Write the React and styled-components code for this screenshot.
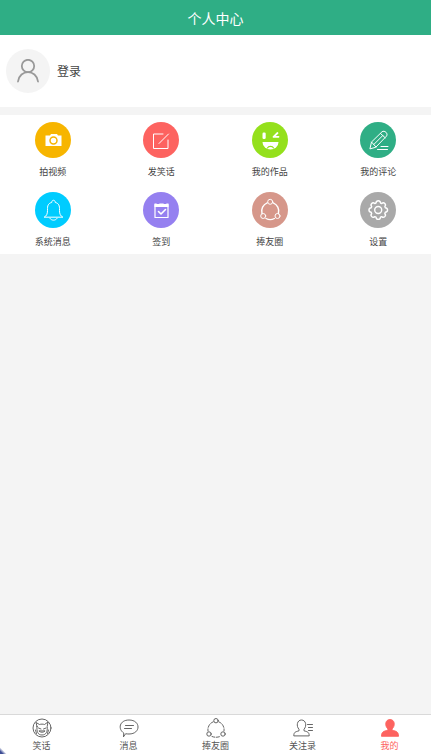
import React from "react";
import styled, { createGlobalStyle } from "styled-components";

const Menu = [
  { id: "video", texto: "拍视频", color: "#f7b500" },
  { id: "post", texto: "发笑话", color: "#fd6360" },
  { id: "works", texto: "我的作品", color: "#94e01c" },
  { id: "comments", texto: "我的评论", color: "#2fae85" },
  { id: "bell", texto: "系统消息", color: "#00ccff" },
  { id: "sign", texto: "签到", color: "#9580f0" },
  { id: "circle", texto: "捧友圈", color: "#d6978a" },
  { id: "settings", texto: "设置", color: "#a9a9a9" },
];

const Tabs = [
  { id: "joke", texto: "笑话" },
  { id: "message", texto: "消息" },
  { id: "circle", texto: "捧友圈" },
  { id: "follow", texto: "关注录" },
  { id: "me", texto: "我的", activo: true },
];

// 36x36 drawings, one for each round button
const MenuIcons = {
  video: (
    <>
      <path
        d="M10.500 13.500h4.500l1-1.500h6l1 1.500h3.500v10.500h-16z"
        fill="currentColor"
        stroke="none"
      />
      <circle cx="18.500" cy="18.500" r="3.500" stroke="#f7b500" strokeWidth="1.500" />
    </>
  ),
  post: <path d="M20 12h-9.500v14.500h14.500V18M16 21.500l9.500-9.500" />,
  works: (
    <>
      <g fill="currentColor" stroke="none">
        <rect x="10.500" y="10.500" width="3.200" height="6.500" rx="1.200" />
        <path d="M10.500 20h16a8 7.500 0 0 1-16 0z" />
      </g>
      <path d="M25.500 11l-4 3.800h5" strokeWidth="1.800" />
      <path d="M15.500 26c1-2.200 5-2.200 6 0" stroke="#94e01c" strokeWidth="1.200" />
    </>
  ),
  comments: (
    <>
      <path d="M10 26.500l1.500-6.500L22 9.800c2.500-2 6.500 1.800 4.500 4.300L16 25zM11.500 20l4.500 5M20.500 11.500l4.700 4.300M13.800 22.500l9-9" />
      <path d="M21 24.500h7M17.500 27.500h10" />
    </>
  ),
  bell: (
    <>
      <path d="M9.500 25c2-1 3-3 3-6.500v-2c0-4 1.800-5.500 4.200-6 0-3 3.600-3 3.600 0 2.400.5 4.200 2 4.200 6v2c0 3.500 1 5.500 3 6.500z" />
      <path d="M15 26.500c1.500 2.300 5.500 2.300 7 0" />
    </>
  ),
  sign: (
    <>
      <path d="M12 12.500h13v13H12z" strokeWidth="1.200" />
      <path
        d="M11.500 11.500h2l1 1.500h1l1-1.500h4l1 1.500h1l1-1.500h2V15h-14z"
        fill="currentColor"
        stroke="none"
      />
      <path d="M15.500 19.500l2.500 2.500 4.500-4.500" strokeWidth="1.600" />
    </>
  ),
  circle: (
    <>
      <path d="M15.200 10.800a9 9 0 0 0-5.200 10.700M21.200 10.800a9 9 0 0 1 5.200 10.700M14 26.500c2.500 1.300 6 1.300 8.400 0" strokeWidth="1.400" />
      <circle cx="18.200" cy="9.800" r="2.500" />
      <circle cx="11.200" cy="24" r="2.500" />
      <circle cx="25.500" cy="24" r="2.500" />
    </>
  ),
  settings: (
    <>
      <path
        d="M16 11c.3-3 4.200-3 4.500 0l1.200.5c2.300-1.900 5 .8 3.100 3.100l.5 1.200c3 .3 3 4.200 0 4.500l-.5 1.200c1.900 2.300-.8 5-3.100 3.100l-1.200.5c-.3 3-4.200 3-4.500 0l-1.200-.5c-2.300 1.900-5-.8-3.100-3.100l-.5-1.200c-3-.3-3-4.200 0-4.500l.5-1.200c-1.900-2.300.8-5 3.100-3.100z"
        strokeWidth="1.400"
      />
      <circle cx="18.200" cy="18" r="3.500" strokeWidth="1.400" />
    </>
  ),
};

// 20x20 drawings for the bottom bar
const TabIcons = {
  joke: (
    <>
      <circle cx="10" cy="10" r="9" />
      <path d="M5 8.500L4 4.500l3.500 2c1.500-.5 3.500-.5 5 0L16 4l-.8 4.500c.5 5-1 8.500-5.200 8.500S4.500 13.500 5 8.500z" />
      <path d="M6.500 10l2.500 1M11.500 11l2.500-1M7.200 13.200c1.500 1.500 4.200 1.500 5.600 0zM4.500 15.500L3.500 12M15.500 15.500l1-3.500" />
    </>
  ),
  message: (
    <>
      <path d="M4.500 18.500l.3-3.500C-1.500 11 .5 2 10 2c12 0 12 14 0 14-1.200 0-2.400-.1-3-.2z" />
      <path d="M6.500 7.500h8M5.500 10.500h7" />
    </>
  ),
  circle: (
    <>
      <path d="M7.200 3.800A8.500 8.500 0 0 0 2 13M12.800 3.800A8.500 8.500 0 0 1 18 13M6 18.500c2.500 1 5.500 1 8 0" strokeDasharray="3 1.500" />
      <circle cx="10" cy="2.700" r="2.200" />
      <circle cx="3" cy="16" r="2.200" />
      <circle cx="17" cy="16" r="2.200" />
    </>
  ),
  follow: (
    <>
      <path d="M.8 17.500c0-3.500 1.700-3.700 5.200-4.700v-1.500C3 8 4 2 8.500 2S14 8 11 11.300v1.500c3.500 1 5.200 1.200 5.200 4.700z" />
      <path d="M14.500 6.500h5M15.500 9.500h4M15.500 12.500h4" />
    </>
  ),
  me: (
    <path
      d="M1.500 18c0-4.500 2-4.500 6.500-6V11C4.500 8 5 1.500 10 1.500S15.500 8 12 11v1c4.500 1.500 6.500 1.500 6.500 6z"
      fill="currentColor"
    />
  ),
};

const App = () => {
  return (
    <>
      <GlobalStyle />
      <Pagina>
        <Header>
          <Titulo>个人中心</Titulo>
        </Header>

        <Main>
          <Perfil>
            <Login type="button">
              <Avatar>
                <svg viewBox="0 0 24 24" width="24" height="24" aria-hidden="true">
                  <circle cx="12" cy="7" r="6.200" />
                  <path d="M2 22.500c1.500-12.500 18.500-12.500 20 0" />
                </svg>
              </Avatar>
              登录
            </Login>
          </Perfil>

          <Opciones>
            {Menu.map(({ id, texto, color }) => (
              <Opcion key={id} type="button">
                <Circulo $color={color}>
                  <svg viewBox="0 0 36 36" width="36" height="36" aria-hidden="true">
                    {MenuIcons[id]}
                  </svg>
                </Circulo>
                {texto}
              </Opcion>
            ))}
          </Opciones>
        </Main>

        <Nav>
          {Tabs.map(({ id, texto, activo }) => (
            <Tab
              key={id}
              href={`#${id}`}
              $activo={activo}
              aria-current={activo ? "page" : undefined}
            >
              <svg viewBox="0 0 20 20" width="20" height="20" aria-hidden="true">
                {TabIcons[id]}
              </svg>
              {texto}
            </Tab>
          ))}
        </Nav>
      </Pagina>
    </>
  );
};

export default App;

const Verde = "#2fae85";
const Rojo = "#fd6360";
const Fondo = "#f4f4f4";

const GlobalStyle = createGlobalStyle`
  * {
    box-sizing: border-box;
  }

  body {
    margin: 0;
    background: ${Fondo};
    color: #444;
    font-family: "Noto Sans CJK SC", sans-serif;
  }

  button {
    padding: 0;
    border: none;
    background: none;
    color: inherit;
    font-family: inherit;
    cursor: pointer;
  }

  svg {
    display: block;
    fill: none;
    stroke: currentColor;
    stroke-linecap: round;
    stroke-linejoin: round;
  }
`;

const Pagina = styled.div`
  display: flex;
  flex-direction: column;
  min-height: 100vh;
`;

// Cabecera

const Header = styled.header`
  display: flex;
  align-items: center;
  justify-content: center;
  height: 35px;
  background: ${Verde};
  color: #fff;
`;

const Titulo = styled.h1`
  margin: 0;
  font-size: 14px;
  font-weight: 400;
  line-height: 20px;
`;

const Main = styled.main`
  display: flex;
  flex: 1;
  flex-direction: column;
  gap: 8px;
`;

// Perfil

const Perfil = styled.section`
  padding: 14px 6px;
  background: #fff;
`;

const Login = styled.button`
  display: flex;
  gap: 7px;
  align-items: center;
  font-size: 12px;
  line-height: 16px;
`;

const Avatar = styled.span`
  display: flex;
  align-items: center;
  justify-content: center;
  width: 44px;
  height: 44px;
  border-radius: 50%;
  background: ${Fondo};
  color: #999;

  svg {
    stroke-width: 1.8;
  }
`;

// Botones redondos

const Opciones = styled.section`
  display: grid;
  grid-template-columns: repeat(4, 1fr);
  gap: 13px 3px;
  padding: 7px 0 5px;
  background: #fff;
`;

const Opcion = styled.button`
  display: flex;
  flex-direction: column;
  gap: 7px;
  align-items: center;
  font-size: 9px;
  line-height: 14px;
`;

const Circulo = styled.span`
  width: 36px;
  height: 36px;
  border-radius: 50%;
  background: ${(props) => props.$color};
  color: #fff;
`;

// Barra inferior, con la esquina izquierda recortada

const Nav = styled.nav`
  position: sticky;
  bottom: 0;
  display: grid;
  grid-template-columns: repeat(5, 1fr);
  gap: 4px;
  padding: 3px 0 1px;
  border-top: 1px solid #d9d9d9;
  background: linear-gradient(45deg, #3c4c94 2px, #fff 5px);
`;

const Tab = styled.a`
  display: flex;
  flex-direction: column;
  gap: 1px;
  align-items: center;
  color: ${(props) => (props.$activo ? Rojo : "#555")};
  font-size: 9px;
  line-height: 14px;
  text-decoration: none;

  svg {
    stroke-width: 0.9;
  }
`;
